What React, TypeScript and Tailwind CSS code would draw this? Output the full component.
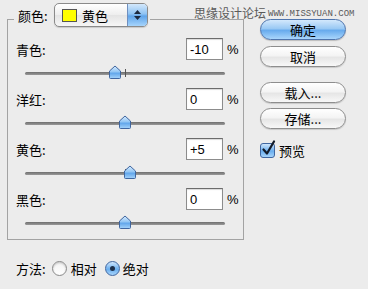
import React from "react"

const cjk = "font-['Noto_Sans_CJK_SC','Noto_Sans',sans-serif]"

const rows = [
  { label: "青色:", value: -10, text: "-10" },
  { label: "洋红:", value: 0, text: "0" },
  { label: "黄色:", value: 5, text: "+5" },
  { label: "黑色:", value: 0, text: "0" },
]

function Thumb({ value }: { value: number }) {
  return (
    <svg
      width="14"
      height="14"
      viewBox="0 0 14 14"
      className="absolute top-0"
      style={{ left: value + 100 - 7 }}
    >
      <defs>
        <linearGradient id="thumbg" x1="0" y1="0" x2="0" y2="1">
          <stop offset="0" stopColor="#d6ebff" />
          <stop offset="0.5" stopColor="#8ec3f3" />
          <stop offset="0.55" stopColor="#5ea4ea" />
          <stop offset="1" stopColor="#a6d4fb" />
        </linearGradient>
      </defs>
      <path
        d="M1.5 12.5 V6 L7 1 L12.5 6 V12.5 Q12.5 13.5 11.5 13.5 H2.5 Q1.5 13.5 1.5 12.5 Z"
        fill="url(#thumbg)"
        stroke="#3f66a0"
        strokeWidth="1"
      />
    </svg>
  )
}

function Slider({ value }: { value: number }) {
  return (
    <div className="relative ml-[9px] mt-[5px] h-[14px] w-[200px] pt-[7px]">
      <div className="h-[3px] w-full rounded-full bg-[linear-gradient(to_bottom,#6e6e6e,#9a9a9a)]" />
      <div className="absolute left-[100px] top-[4px] h-[8px] w-px bg-[#555]" />
      <Thumb value={value} />
    </div>
  )
}

function Button({ children, primary }: { children: React.ReactNode; primary?: boolean }) {
  return (
    <div
      className={
        primary
          ? "flex h-[21px] w-[86px] items-center justify-center rounded-full border border-[#4f75ad] bg-[linear-gradient(to_bottom,#d3e8fc_0%,#9ac9f4_45%,#68abed_55%,#a9d6fc_100%)] text-[13px] leading-none shadow-[0_1px_1px_rgba(0,0,0,0.2)]"
          : "flex h-[21px] w-[86px] items-center justify-center rounded-full border border-[#8e8e8e] bg-[linear-gradient(to_bottom,#ffffff_0%,#f4f4f4_45%,#e6e6e6_55%,#f8f8f8_100%)] text-[13px] leading-none shadow-[0_1px_1px_rgba(0,0,0,0.15)]"
      }
    >
      {children}
    </div>
  )
}

function Radio({ checked }: { checked?: boolean }) {
  return checked ? (
    <div className="flex h-[15px] w-[15px] items-center justify-center rounded-full border border-[#3f66a0] bg-[linear-gradient(to_bottom,#cfe6fc,#6aaeee_55%,#a6d4fb)]">
      <div className="h-[5px] w-[5px] rounded-full bg-[#1d2f4a]" />
    </div>
  ) : (
    <div className="h-[15px] w-[15px] rounded-full border border-[#8a8a8a] bg-[linear-gradient(to_bottom,#f2f2f2,#ffffff)] shadow-[inset_0_1px_2px_rgba(0,0,0,0.2)]" />
  )
}

export default function App() {
  return (
    <div className={`relative h-[289px] w-[368px] overflow-hidden bg-[#ececec] text-[13px] text-black ${cjk}`}>
      <div className="flex">
        <div className="ml-[7px] w-[237px]">
          <div className="mt-[19px] box-border h-[221px] border border-[#a3a3a3]">
            <div className="-mt-[17px] ml-[6px] flex h-[24px] w-fit items-center bg-[#ececec] pl-[4px] pr-[2px]">
              <span className="w-[36px] leading-none">颜色:</span>
              <div className="flex h-[24px] w-[94px] items-center overflow-hidden rounded-[5px] border border-[#8a8a8a] bg-[linear-gradient(to_bottom,#ffffff,#eeeeee_50%,#e4e4e4_52%,#f6f6f6)] shadow-[0_1px_1px_rgba(0,0,0,0.15)]">
                <div className="ml-[7px] h-[13px] w-[15px] border border-[#555] bg-[#ffff00]" />
                <span className="ml-[5px] leading-none">黄色</span>
                <div className="ml-auto flex h-full w-[20px] flex-col items-center justify-center gap-[2px] border-l border-[#6f8fbf] bg-[linear-gradient(to_bottom,#d3e8fc,#8fc3f3_45%,#5fa4ea_55%,#a6d4fb)]">
                  <svg width="7" height="4" viewBox="0 0 7 4">
                    <path d="M3.5 0 L7 4 H0 Z" fill="#1c2a40" />
                  </svg>
                  <svg width="7" height="4" viewBox="0 0 7 4">
                    <path d="M0 0 H7 L3.5 4 Z" fill="#1c2a40" />
                  </svg>
                </div>
              </div>
            </div>
            <div className="mt-[11px] flex flex-col gap-[9px] pl-[8px]">
              {rows.map((r) => (
                <div key={r.label}>
                  <div className="flex h-[22px] items-center">
                    <span className="flex-1 leading-none">{r.label}</span>
                    <div className="flex h-[22px] w-[37px] items-center border border-[#8c8c8c] border-t-[#6c6c6c] bg-white px-[3px] font-['Liberation_Sans',sans-serif] text-[13px] leading-none shadow-[inset_0_1px_1px_rgba(0,0,0,0.15)]">
                      {r.text}
                    </div>
                    <span className="ml-[4px] w-[16px] font-['Liberation_Sans',sans-serif] leading-none">%</span>
                  </div>
                  <Slider value={r.value} />
                </div>
              ))}
            </div>
          </div>
          <div className="mt-[20px] ml-[9px] flex h-[16px] items-center">
            <span className="leading-none">方法:</span>
            <div className="ml-[6px]">
              <Radio />
            </div>
            <span className="ml-[4px] leading-none">相对</span>
            <div className="ml-[8px]">
              <Radio checked />
            </div>
            <span className="ml-[3px] leading-none">绝对</span>
          </div>
        </div>
        <div className="ml-[16px] flex flex-col pt-[19px]">
          <Button primary>确定</Button>
          <div className="mt-[6px]">
            <Button>取消</Button>
          </div>
          <div className="mt-[15px]">
            <Button>载入...</Button>
          </div>
          <div className="mt-[5px]">
            <Button>存储...</Button>
          </div>
          <div className="mt-[14px] flex items-center">
            <div className="relative h-[15px] w-[15px] rounded-[3px] border border-[#3f66a0] bg-[linear-gradient(to_bottom,#cfe6fc,#6aaeee_55%,#a6d4fb)]">
              <svg width="15" height="17" viewBox="0 0 15 17" className="absolute -top-[4px] left-[0px]">
                <path d="M2.5 9.5 L6 13.5 L13 1.5" fill="none" stroke="#141c2a" strokeWidth="2.2" strokeLinecap="round" strokeLinejoin="round" />
              </svg>
            </div>
            <span className="ml-[4px] leading-none">预览</span>
          </div>
        </div>
      </div>
      <div className="absolute left-[194px] top-[7px] flex items-end text-[#5a5a5a]">
        <span className="text-[12px] leading-none">思缘设计论坛</span>
        <span className="ml-[2px] font-['Liberation_Mono',monospace] text-[9px] leading-none">WWW.MISSYUAN.COM</span>
      </div>
    </div>
  )
}
